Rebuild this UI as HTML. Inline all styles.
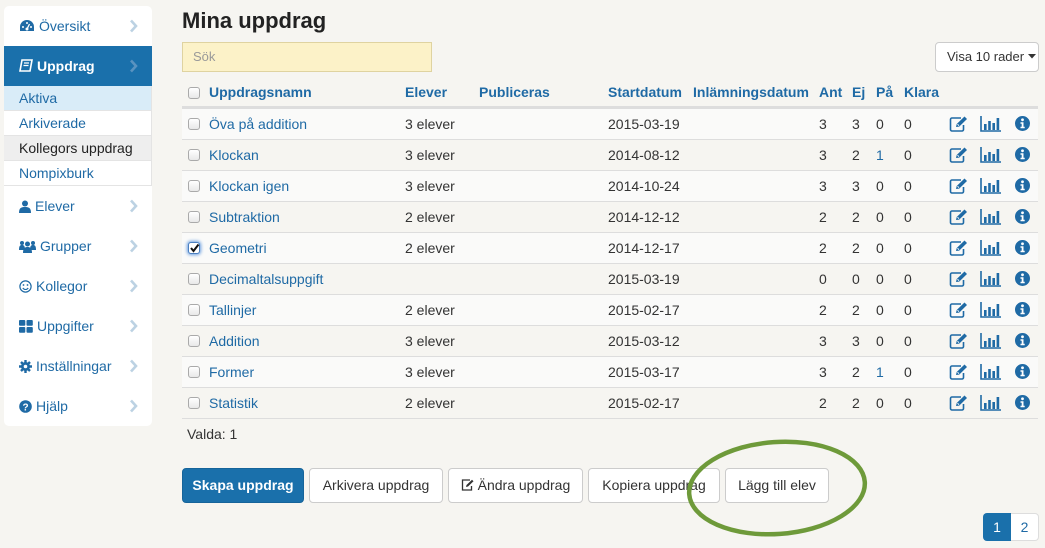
<!DOCTYPE html>
<html><head><meta charset="utf-8">
<style>
*{box-sizing:border-box;margin:0;padding:0}
body{width:1045px;height:548px;background:#f6f5f1;font-family:"Liberation Sans",Arial,sans-serif;font-size:14px;color:#333;position:relative;overflow:hidden}
.a{position:absolute}
.side{left:4px;top:6px;width:148px;height:420px;background:#fff;border-radius:5px;overflow:hidden}
.nav{position:absolute;left:0;width:148px;height:40px;line-height:40px;color:#1f6aa5;font-size:14px;padding-left:15px}
.nav .ch{position:absolute;right:10px;top:13px}
.nav svg{vertical-align:-2px;margin-right:4px}
.sub{position:absolute;left:0;width:148px;height:25px;line-height:25px;padding-left:15px;color:#1f6aa5;border-bottom:1px solid #e4e4e4;border-right:1px solid #e4e4e4}
h1{position:absolute;left:182px;top:8px;font-size:22px;font-weight:bold;color:#222}
.row{position:absolute;left:182px;width:856px;height:31px;line-height:30px;border-top:1px solid #ddd}
.row span,.hd span{position:absolute;top:0}
.cb{position:absolute;left:6px;top:9px;width:12px;height:12px;border:1px solid #aaa;border-radius:3px;background:linear-gradient(#fff,#e8e8e8)}
.lnk{color:#1f6aa5}
.hd{position:absolute;left:182px;top:80px;width:856px;height:28px;line-height:24px;font-weight:bold;color:#1f6aa5;border-bottom:2px solid #ddd}
.ic{position:absolute;top:7px}
.btn{position:absolute;top:468px;height:35px;line-height:33px;border:1px solid #ccc;border-radius:4px;background:#fff;text-align:center;font-size:14px;color:#333}
</style></head><body>
<div class="a side">
 <div class="nav" style="top:0"><svg width="16" height="14" viewBox="0 0 16 14"><path d="M8 1A7 7 0 0 0 1 8v4h14V8A7 7 0 0 0 8 1z" fill="#1f6aa5"/><circle cx="8" cy="10" r="1.5" fill="#fff"/><path d="M8 10L10.5 5" stroke="#fff" stroke-width="1.3"/><circle cx="4" cy="8" r="1" fill="#fff"/><circle cx="12" cy="8" r="1" fill="#fff"/><circle cx="8" cy="4" r="1" fill="#fff"/></svg>Översikt<svg class="ch" width="9" height="14" viewBox="0 0 9 14"><path d="M2 1.5l5 5.5-5 5.5" fill="none" stroke="#bcd2e3" stroke-width="2.6"/></svg></div>
 <div class="nav" style="top:40px;background:#1a70ab;color:#fff;font-weight:bold"><svg width="14" height="14" viewBox="0 0 14 14"><path d="M3 1h10l-2 11H1z" fill="none" stroke="#fff" stroke-width="1.6"/><path d="M5 4h5M4.5 6.5h5" stroke="#fff" stroke-width="1.2"/></svg>Uppdrag<svg class="ch" width="9" height="14" viewBox="0 0 9 14"><path d="M2 1.5l5 5.5-5 5.5" fill="none" stroke="#5a93c0" stroke-width="2.6"/></svg></div>
 <div class="sub" style="top:80px;background:#d9ecf8">Aktiva</div>
 <div class="sub" style="top:105px">Arkiverade</div>
 <div class="sub" style="top:130px;background:#eee;color:#222">Kollegors uppdrag</div>
 <div class="sub" style="top:155px">Nompixburk</div>
 <div class="nav" style="top:180px"><svg width="12" height="13" viewBox="0 0 12 13"><circle cx="6" cy="3.5" r="3" fill="#1f6aa5"/><path d="M0 13c0-5 2-6 6-6s6 1 6 6z" fill="#1f6aa5"/></svg>Elever<svg class="ch" width="9" height="14" viewBox="0 0 9 14"><path d="M2 1.5l5 5.5-5 5.5" fill="none" stroke="#bcd2e3" stroke-width="2.6"/></svg></div>
 <div class="nav" style="top:220px"><svg width="17" height="13" viewBox="0 0 17 13"><circle cx="8.5" cy="4" r="2.5" fill="#1f6aa5"/><circle cx="3" cy="3" r="2" fill="#1f6aa5"/><circle cx="14" cy="3" r="2" fill="#1f6aa5"/><path d="M4 13c0-5 2-6 4.5-6S13 8 13 13z" fill="#1f6aa5"/><path d="M0 10c0-4 1-5 3-5s3 1 3 5zM11 10c0-4 1-5 3-5s3 1 3 5z" fill="#1f6aa5"/></svg>Grupper<svg class="ch" width="9" height="14" viewBox="0 0 9 14"><path d="M2 1.5l5 5.5-5 5.5" fill="none" stroke="#bcd2e3" stroke-width="2.6"/></svg></div>
 <div class="nav" style="top:260px"><svg width="13" height="13" viewBox="0 0 13 13"><circle cx="6.5" cy="6.5" r="5.6" fill="none" stroke="#1f6aa5" stroke-width="1.2"/><circle cx="4.5" cy="5" r=".9" fill="#1f6aa5"/><circle cx="8.5" cy="5" r=".9" fill="#1f6aa5"/><path d="M3.8 8c1.5 2 4 2 5.4 0" stroke="#1f6aa5" fill="none" stroke-width="1.1"/></svg>Kollegor<svg class="ch" width="9" height="14" viewBox="0 0 9 14"><path d="M2 1.5l5 5.5-5 5.5" fill="none" stroke="#bcd2e3" stroke-width="2.6"/></svg></div>
 <div class="nav" style="top:300px"><svg width="14" height="13" viewBox="0 0 14 13"><rect x="0" y="0" width="6.3" height="5.8" rx="1" fill="#1f6aa5"/><rect x="7.5" y="0" width="6.3" height="5.8" rx="1" fill="#1f6aa5"/><rect x="0" y="7" width="6.3" height="5.8" rx="1" fill="#1f6aa5"/><rect x="7.5" y="7" width="6.3" height="5.8" rx="1" fill="#1f6aa5"/></svg>Uppgifter<svg class="ch" width="9" height="14" viewBox="0 0 9 14"><path d="M2 1.5l5 5.5-5 5.5" fill="none" stroke="#bcd2e3" stroke-width="2.6"/></svg></div>
 <div class="nav" style="top:340px"><svg width="13" height="13" viewBox="0 0 13 13"><circle cx="6.5" cy="6.5" r="4.5" fill="#1f6aa5"/><path d="M6.5 0v13M0 6.5h13M2 2l9 9M11 2l-9 9" stroke="#1f6aa5" stroke-width="2.4"/><circle cx="6.5" cy="6.5" r="1.8" fill="#fff"/></svg>Inställningar<svg class="ch" width="9" height="14" viewBox="0 0 9 14"><path d="M2 1.5l5 5.5-5 5.5" fill="none" stroke="#bcd2e3" stroke-width="2.6"/></svg></div>
 <div class="nav" style="top:380px"><svg width="13" height="13" viewBox="0 0 13 13"><circle cx="6.5" cy="6.5" r="6.3" fill="#1f6aa5"/><text x="6.5" y="10.3" font-size="10" font-weight="bold" fill="#fff" text-anchor="middle" font-family="Liberation Sans">?</text></svg>Hjälp<svg class="ch" width="9" height="14" viewBox="0 0 9 14"><path d="M2 1.5l5 5.5-5 5.5" fill="none" stroke="#bcd2e3" stroke-width="2.6"/></svg></div>
</div>

<h1>Mina uppdrag</h1>
<div class="a" style="left:182px;top:42px;width:250px;height:30px;background:#fcf2c8;border:1px solid #dfd3a0;color:#999;font-size:13px;line-height:28px;padding-left:10px">Sök</div>
<div class="a" style="left:935px;top:42px;width:104px;height:30px;background:#fff;border:1px solid #ccc;border-radius:4px;font-size:13px;line-height:28px;padding-left:11px;color:#333">Visa 10 rader <svg width="8" height="5" viewBox="0 0 8 5" style="vertical-align:2px"><path d="M0 0h8L4 4.5z" fill="#333"/></svg></div>

<div class="hd"><div class="cb" style="top:7px"></div><span style="left:27px">Uppdragsnamn</span><span style="left:223px">Elever</span><span style="left:297px">Publiceras</span><span style="left:426px">Startdatum</span><span style="left:511px">Inlämningsdatum</span><span style="left:637px">Ant</span><span style="left:670px">Ej</span><span style="left:694px">På</span><span style="left:722px">Klara</span></div>

<div id="rows"></div>
<div class="a" style="left:182px;top:418px;width:856px;border-top:1px solid #ddd"></div>
<div class="a" style="left:187px;top:426px">Valda: 1</div>

<div class="btn" style="left:182px;width:122px;background:#1a70ab;border-color:#16649a;color:#fff;font-weight:bold">Skapa uppdrag</div>
<div class="btn" style="left:309px;width:134px">Arkivera uppdrag</div>
<div class="btn" style="left:448px;width:135px"><svg width="13" height="12" viewBox="0 0 13 12" style="vertical-align:-1px"><path d="M9 1H1.5v10h9V7" fill="none" stroke="#333" stroke-width="1.3"/><path d="M5 8l.5-2L11 .8l1.5 1.5L7 7.5z" fill="#333"/></svg> Ändra uppdrag</div>
<div class="btn" style="left:588px;width:132px">Kopiera uppdrag</div>
<div class="btn" style="left:725px;width:104px">Lägg till elev</div>
<svg class="a" style="left:685px;top:436px" width="185" height="104"><ellipse cx="92" cy="52" rx="88" ry="46" fill="none" stroke="#6e9a3a" stroke-width="4.5" transform="rotate(-4 92 52)"/></svg>

<div class="a" style="left:983px;top:513px;width:28px;height:28px;background:#1a70ab;color:#fff;border-radius:4px 0 0 4px;text-align:center;line-height:28px">1</div>
<div class="a" style="left:1011px;top:513px;width:28px;height:28px;background:#fff;border:1px solid #ddd;border-left:0;color:#1f6aa5;border-radius:0 4px 4px 0;text-align:center;line-height:26px">2</div>

<script>
var d=[["Öva på addition","3 elever","2015-03-19",3,3,0,0],["Klockan","3 elever","2014-08-12",3,2,1,0],["Klockan igen","3 elever","2014-10-24",3,3,0,0],["Subtraktion","2 elever","2014-12-12",2,2,0,0],["Geometri","2 elever","2014-12-17",2,2,0,0],["Decimaltalsuppgift","","2015-03-19",0,0,0,0],["Tallinjer","2 elever","2015-02-17",2,2,0,0],["Addition","3 elever","2015-03-12",3,3,0,0],["Former","3 elever","2015-03-17",3,2,1,0],["Statistik","2 elever","2015-02-17",2,2,0,0]];
var ed='<svg class="ic" style="left:767px" width="20" height="16" viewBox="0 0 20 16"><path d="M12 2H3a1.5 1.5 0 0 0-1.5 1.5v10A1.5 1.5 0 0 0 3 15h10a1.5 1.5 0 0 0 1.5-1.5V9" fill="none" stroke="#1f6aa5" stroke-width="1.6"/><path d="M7 11l.7-3L15.5 .5l2.5 2.5-7.8 7.6z" fill="#1f6aa5"/><path d="M8.5 8.2l1.5 1.5" stroke="#fff" stroke-width="1"/></svg>';
var ch='<svg class="ic" style="left:798px" width="21" height="16" viewBox="0 0 21 16"><path d="M1 0v15h20" fill="none" stroke="#1f6aa5" stroke-width="1.6"/><rect x="4" y="8" width="2.6" height="6" fill="#1f6aa5"/><rect x="8.2" y="5" width="2.6" height="9" fill="#1f6aa5"/><rect x="12.4" y="7" width="2.6" height="7" fill="#1f6aa5"/><rect x="16.6" y="2" width="2.6" height="12" fill="#1f6aa5"/></svg>';
var inf='<svg class="ic" style="left:833px" width="15" height="15" viewBox="0 0 15 15"><circle cx="7.5" cy="7.5" r="7.5" fill="#1f6aa5"/><circle cx="7.5" cy="3.8" r="1.4" fill="#fff"/><path d="M5.5 6.2h3v4.6h1.2v1.5H5.5v-1.5h1.2V7.7H5.5z" fill="#fff"/></svg>';
var h='';
d.forEach(function(r,i){
 var bg=i%2==0?'#fafaf9':'#f6f5f1';
 var cb=i==4?'<div class="cb" style="background:#fff;border-color:#4a7fc0;box-shadow:0 0 3px 1px #6a9ee0"><svg width="11" height="11" style="position:absolute;left:0;top:0"><path d="M2 5l2.5 3L9.5 1.5" stroke="#111" stroke-width="2" fill="none"/></svg></div>':'<div class="cb"></div>';
 var p=r[5]==1?'<span style="left:694px;color:#1f6aa5">1</span>':'<span style="left:694px">'+r[5]+'</span>';
 h+='<div class="row" style="top:'+(108+31*i)+'px;background:'+bg+'">'+cb+'<span class="lnk" style="left:27px">'+r[0]+'</span><span style="left:223px">'+r[1]+'</span><span style="left:426px">'+r[2]+'</span><span style="left:637px">'+r[3]+'</span><span style="left:670px">'+r[4]+'</span>'+p+'<span style="left:722px">'+r[6]+'</span>'+ed+ch+inf+'</div>';
});
document.getElementById('rows').innerHTML=h;
</script>
</body></html>
